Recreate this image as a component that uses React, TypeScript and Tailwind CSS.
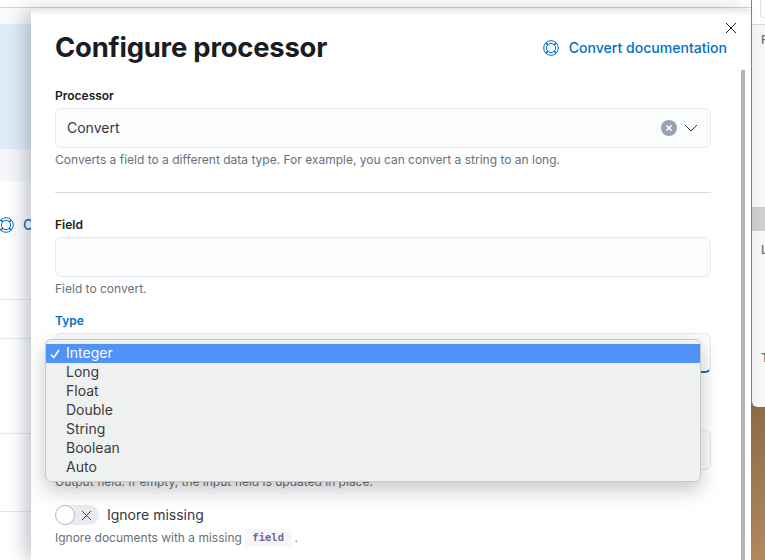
import React from "react";

const Lifebuoy = ({ className }: { className?: string }) => (
  <svg viewBox="0 0 16 16" className={className} fill="none" stroke="currentColor" strokeWidth="1">
    <circle cx="8" cy="8" r="7.3" />
    <circle cx="8" cy="8" r="4.6" />
    <path d="M2.8 2.8l2.2 2.2M13.2 2.8L11 5M2.8 13.2L5 11M13.2 13.2L11 11" strokeWidth="1.6" />
  </svg>
);

const Field = ({ label, labelClass, help, children }: { label?: string; labelClass?: string; help?: React.ReactNode; children: React.ReactNode }) => (
  <div className="flex flex-col">
    {label && <div className={`h-[21px] text-[12px] leading-[18px] font-semibold ${labelClass ?? "text-[#1a1c21]"}`}>{label}</div>}
    {children}
    {help && <div className="mt-[4px] h-[16px] text-[12px] leading-[16px] text-[#69707d]">{help}</div>}
  </div>
);

const Input = ({ children, className }: { children?: React.ReactNode; className?: string }) => (
  <div className={`h-[40px] rounded-[6px] border border-[#e6e8f2] bg-[#fbfcfd] flex items-center pl-[11px] pr-[12px] text-[14px] text-[#343741] ${className ?? ""}`}>{children}</div>
);

const options = ["Integer", "Long", "Float", "Double", "String", "Boolean", "Auto"];

export default function App() {
  return (
    <div className="relative h-[560px] w-[765px] overflow-hidden bg-white font-['Inter','Liberation_Sans',sans-serif]">
      {/* Page behind the flyout */}
      <div className="flex h-full w-[751px] flex-col">
        <div className="h-[8px] shrink-0 bg-white border-b border-[#d3d6df]" />
        <div className="h-[16px] shrink-0 bg-[#fafbfd]" />
        <div className="h-[125px] shrink-0 bg-[#e1edf6]" />
        <div className="h-[32px] shrink-0 bg-[#f5f7fa]" />
        <div className="-ml-[2px] flex h-[118px] shrink-0 items-start gap-[9px] pt-[36px] text-[#0071c2]">
          <Lifebuoy className="h-[16px] w-[16px]" />
          <span className="text-[14px] leading-[16px] font-medium">Convert</span>
        </div>
        <div className="h-[39px] shrink-0 border-t border-[#e4e8f0]" />
        <div className="h-[95px] shrink-0 border-t border-[#e4e8f0]" />
        <div className="h-[78px] shrink-0 border-t border-[#e4e8f0]" />
        <div className="flex-1 border-t border-[#e4e8f0]" />
      </div>

      {/* Desktop and neighbouring window on the right */}
      <div className="absolute inset-y-0 left-[751px] right-0 bg-[linear-gradient(180deg,#8f6b48_72%,#b28a5e_100%)]">
        <div className="flex h-[407px] flex-col rounded-bl-[6px] border-l border-[#7d8494] bg-[#f7f7f8] text-[12px] font-medium text-[#6b6f78]">
          <div className="h-[25px] shrink-0 border-b border-[#d9dbe0] bg-white pl-[8px]">
            <div className="h-[18px] rounded-bl-[4px] border-b border-l border-[#e0e2e8]" />
          </div>
          <div className="h-[182px] shrink-0 pl-[9px] pt-[7px] leading-[16px]">F</div>
          <div className="h-[24px] shrink-0 bg-[#cfcfcf]" />
          <div className="h-[119px] shrink-0 pl-[9px] pt-[11px] leading-[16px]">L</div>
          <div className="pl-[9px] leading-[16px]">T</div>
        </div>
      </div>

      {/* Flyout */}
      <div className="absolute bottom-0 left-[31px] top-[9px] w-[720px] bg-white px-[24px] shadow-[-8px_0_18px_-2px_rgba(50,60,80,0.3)]">
        <div className="absolute inset-x-0 top-0 h-[7px] bg-[linear-gradient(180deg,#e8e9ee,#ffffff)]" />
        <button className="absolute right-[14px] top-[13px] text-[#1a1c21]">
          <svg viewBox="0 0 12 12" className="h-[12px] w-[12px]" fill="none" stroke="currentColor" strokeWidth="1">
            <path d="M1 1l10 10M11 1L1 11" />
          </svg>
        </button>
        <div className="absolute bottom-0 right-[6px] top-[61px] w-[4px] bg-[#b0b4bc]" />
        <div className="relative flex h-[78px] items-start justify-between pt-[20px]">
          <h1 className="text-[27.4px] leading-[36px] font-bold tracking-[-0.2px] text-[#1a1c21]">Configure processor</h1>
          <div className="flex items-center gap-[10px] pt-[9px] text-[14.05px] leading-[20px] font-medium text-[#0071c2]">
            <Lifebuoy className="h-[16px] w-[16px]" />
            <span>Convert documentation</span>
          </div>
        </div>
        <div className="w-[656px]">
          <Field label="Processor" help="Converts a field to a different data type. For example, you can convert a string to an long.">
            <Input>
              <span className="flex-1 pb-[2px]">Convert</span>
              <span className="flex h-[16px] w-[16px] items-center justify-center rounded-full bg-[#98a2b3]">
                <svg viewBox="0 0 8 8" className="h-[8px] w-[8px]" fill="none" stroke="white" strokeWidth="1.6">
                  <path d="M1.5 1.5l5 5M6.5 1.5l-5 5" />
                </svg>
              </span>
              <svg viewBox="0 0 14 8" className="ml-[7px] h-[8px] w-[14px]" fill="none" stroke="#343741" strokeWidth="1">
                <path d="M1 1l6 6 6-6" />
              </svg>
            </Input>
          </Field>
          <div className="mb-[23px] mt-[24px] h-px bg-[#d3dae6]" />
          <Field label="Field" help="Field to convert.">
            <Input />
          </Field>
          <div className="mt-[15px]">
            <Field label="Type" labelClass="text-[#0071c2]">
              <Input className="relative border-b-2 border-b-[#0071c2]" />
            </Field>
          </div>
          <div className="mt-[57px]">
            <Field help="Output field. If empty, the input field is updated in place.">
              <Input />
            </Field>
          </div>
          <div className="mt-[13px] flex h-[24px] items-center gap-[8px]">
            <div className="flex h-[20px] w-[44px] items-center rounded-full bg-[#e9ebf0]">
              <span className="h-[20px] w-[20px] rounded-full border border-[#b5bac4] bg-white" />
              <svg viewBox="0 0 12 12" className="ml-[6px] h-[11px] w-[11px]" fill="none" stroke="#343741" strokeWidth="1">
                <path d="M1 1l10 10M11 1L1 11" />
              </svg>
            </div>
            <span className="pb-[2px] text-[14px] text-[#343741]">Ignore missing</span>
          </div>
          <div className="mt-[2px] flex h-[18px] items-center text-[12px] text-[#69707d]">
            <span>Ignore documents with a missing</span>
            <code className="ml-[2.5px] mr-[2.5px] rounded-[3px] bg-[#f5f7fa] px-[8px] py-[1px] font-['DejaVu_Sans_Mono','Liberation_Mono',monospace] text-[10.5px] font-bold text-[#7c609e]">field</code>
            <span>.</span>
          </div>
        </div>
      </div>

      {/* Native select menu */}
      <div className="absolute left-[45px] top-[339px] w-[656px] rounded-[6px] border border-[#c8c8c8] bg-[#eff0f0] py-[4px] text-[14px] leading-[18px] text-[#3b3b3b] shadow-[0_8px_20px_rgba(0,0,0,0.22)]">
        {options.map((o, i) => (
          <div key={o} className={`relative h-[19px] pl-[20px] ${i === 0 ? "bg-[#4f92f8] text-white" : ""}`}>
            {i === 0 && (
              <svg viewBox="0 0 10 10" className="absolute left-[4px] top-[5px] h-[10px] w-[10px]" fill="none" stroke="white" strokeWidth="1.6">
                <path d="M1 5.5l2.8 3L9 1" />
              </svg>
            )}
            {o}
          </div>
        ))}
      </div>
    </div>
  );
}
